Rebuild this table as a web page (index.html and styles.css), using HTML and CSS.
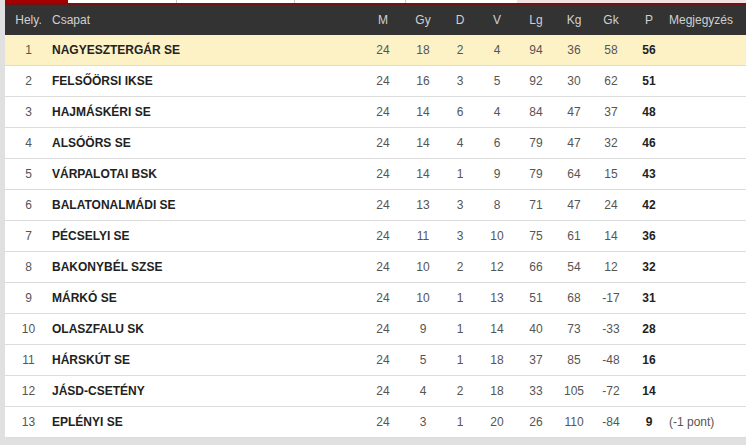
FILE: index.html
```html
<!DOCTYPE html>
<html lang="hu">
<head>
<meta charset="utf-8">
<title>Tabella</title>
<link rel="stylesheet" href="styles.css">
</head>
<body>
<div class="wrap">
  <div class="tabs">
    <div class="tab tab-active"></div>
    <div class="tab tab-a"></div>
    <div class="tab tab-b"></div>
    <div class="tab tab-c"></div>
    <div class="tab tab-d"></div>
    <div class="tab-rest"></div>
  </div>
  <div class="tabline"></div>
  <table class="standings">
    <colgroup>
      <col class="c-hely"><col class="c-team"><col class="c-m"><col class="c-gy"><col class="c-d"><col class="c-v"><col class="c-lg"><col class="c-kg"><col class="c-gk"><col class="c-p"><col class="c-note">
    </colgroup>
    <thead>
      <tr>
        <th class="num">Hely.</th><th class="team">Csapat</th><th class="num">M</th><th class="num">Gy</th><th class="num">D</th><th class="num">V</th><th class="num">Lg</th><th class="num">Kg</th><th class="num">Gk</th><th class="num">P</th><th class="note">Megjegyzés</th>
      </tr>
    </thead>
    <tbody>
      <tr class="hl"><td class="num">1</td><td class="team">NAGYESZTERGÁR SE</td><td class="num">24</td><td class="num">18</td><td class="num">2</td><td class="num">4</td><td class="num">94</td><td class="num">36</td><td class="num">58</td><td class="pts">56</td><td class="note"></td></tr>
      <tr><td class="num">2</td><td class="team">FELSŐÖRSI IKSE</td><td class="num">24</td><td class="num">16</td><td class="num">3</td><td class="num">5</td><td class="num">92</td><td class="num">30</td><td class="num">62</td><td class="pts">51</td><td class="note"></td></tr>
      <tr><td class="num">3</td><td class="team">HAJMÁSKÉRI SE</td><td class="num">24</td><td class="num">14</td><td class="num">6</td><td class="num">4</td><td class="num">84</td><td class="num">47</td><td class="num">37</td><td class="pts">48</td><td class="note"></td></tr>
      <tr><td class="num">4</td><td class="team">ALSÓÖRS SE</td><td class="num">24</td><td class="num">14</td><td class="num">4</td><td class="num">6</td><td class="num">79</td><td class="num">47</td><td class="num">32</td><td class="pts">46</td><td class="note"></td></tr>
      <tr><td class="num">5</td><td class="team">VÁRPALOTAI BSK</td><td class="num">24</td><td class="num">14</td><td class="num">1</td><td class="num">9</td><td class="num">79</td><td class="num">64</td><td class="num">15</td><td class="pts">43</td><td class="note"></td></tr>
      <tr><td class="num">6</td><td class="team">BALATONALMÁDI SE</td><td class="num">24</td><td class="num">13</td><td class="num">3</td><td class="num">8</td><td class="num">71</td><td class="num">47</td><td class="num">24</td><td class="pts">42</td><td class="note"></td></tr>
      <tr><td class="num">7</td><td class="team">PÉCSELYI SE</td><td class="num">24</td><td class="num">11</td><td class="num">3</td><td class="num">10</td><td class="num">75</td><td class="num">61</td><td class="num">14</td><td class="pts">36</td><td class="note"></td></tr>
      <tr><td class="num">8</td><td class="team">BAKONYBÉL SZSE</td><td class="num">24</td><td class="num">10</td><td class="num">2</td><td class="num">12</td><td class="num">66</td><td class="num">54</td><td class="num">12</td><td class="pts">32</td><td class="note"></td></tr>
      <tr><td class="num">9</td><td class="team">MÁRKÓ SE</td><td class="num">24</td><td class="num">10</td><td class="num">1</td><td class="num">13</td><td class="num">51</td><td class="num">68</td><td class="num">-17</td><td class="pts">31</td><td class="note"></td></tr>
      <tr><td class="num">10</td><td class="team">OLASZFALU SK</td><td class="num">24</td><td class="num">9</td><td class="num">1</td><td class="num">14</td><td class="num">40</td><td class="num">73</td><td class="num">-33</td><td class="pts">28</td><td class="note"></td></tr>
      <tr><td class="num">11</td><td class="team">HÁRSKÚT SE</td><td class="num">24</td><td class="num">5</td><td class="num">1</td><td class="num">18</td><td class="num">37</td><td class="num">85</td><td class="num">-48</td><td class="pts">16</td><td class="note"></td></tr>
      <tr><td class="num">12</td><td class="team">JÁSD-CSETÉNY</td><td class="num">24</td><td class="num">4</td><td class="num">2</td><td class="num">18</td><td class="num">33</td><td class="num">105</td><td class="num">-72</td><td class="pts">14</td><td class="note"></td></tr>
      <tr><td class="num">13</td><td class="team">EPLÉNYI SE</td><td class="num">24</td><td class="num">3</td><td class="num">1</td><td class="num">20</td><td class="num">26</td><td class="num">110</td><td class="num">-84</td><td class="pts">9</td><td class="note">(-1 pont)</td></tr>
    </tbody>
  </table>
</div>
</body>
</html>
```

FILE: styles.css
```css
html, body {
  margin: 0;
  padding: 0;
  background: #e0e0e0;
  overflow: hidden;
}
body {
  font-family: "Liberation Sans", Arial, sans-serif;
  font-size: 12px;
}
.wrap {
  padding-left: 5px;
  width: 741px;
}
.tabs {
  display: flex;
  height: 3px;
}
.tab {
  background: #fff;
  border-right: 1px solid #c8c8c8;
}
.tab-active { width: 63px; background: #a40000; border-right: 0; }
.tab-a { width: 108px; }
.tab-b { width: 117px; }
.tab-c { width: 110px; }
.tab-d { width: 111px; border-right: 0; }
.tab-rest { flex: 1; background: #f3e2e2; }
.tabline {
  height: 2px;
  background: #6e1414;
}
.standings {
  width: 741px;
  border-collapse: collapse;
  table-layout: fixed;
}
.c-hely { width: 47px; }
.c-team { width: 310px; }
.c-m { width: 42px; }
.c-gy { width: 38px; }
.c-d { width: 36px; }
.c-v { width: 38px; }
.c-lg { width: 40px; }
.c-kg { width: 36px; }
.c-gk { width: 38px; }
.c-p { width: 38px; }
.standings thead th {
  background: #333333;
  color: #d0d0d0;
  font-weight: normal;
  height: 30px;
  padding: 0;
  vertical-align: middle;
}
.standings td {
  background: #fff;
  height: 30px;
  padding: 0;
  border-bottom: 1px solid #dcdcdc;
  color: #555;
  vertical-align: middle;
}
.standings tr.hl td {
  background: #fdf2c6;
}
.num { text-align: center; }
.team { text-align: left; padding-left: 0; }
td.team {
  font-weight: bold;
  color: #222;
  letter-spacing: 0;
}
td.pts {
  text-align: center;
  font-weight: bold;
  color: #222;
}
.note {
  text-align: left;
  padding-left: 1px !important;
}
```
